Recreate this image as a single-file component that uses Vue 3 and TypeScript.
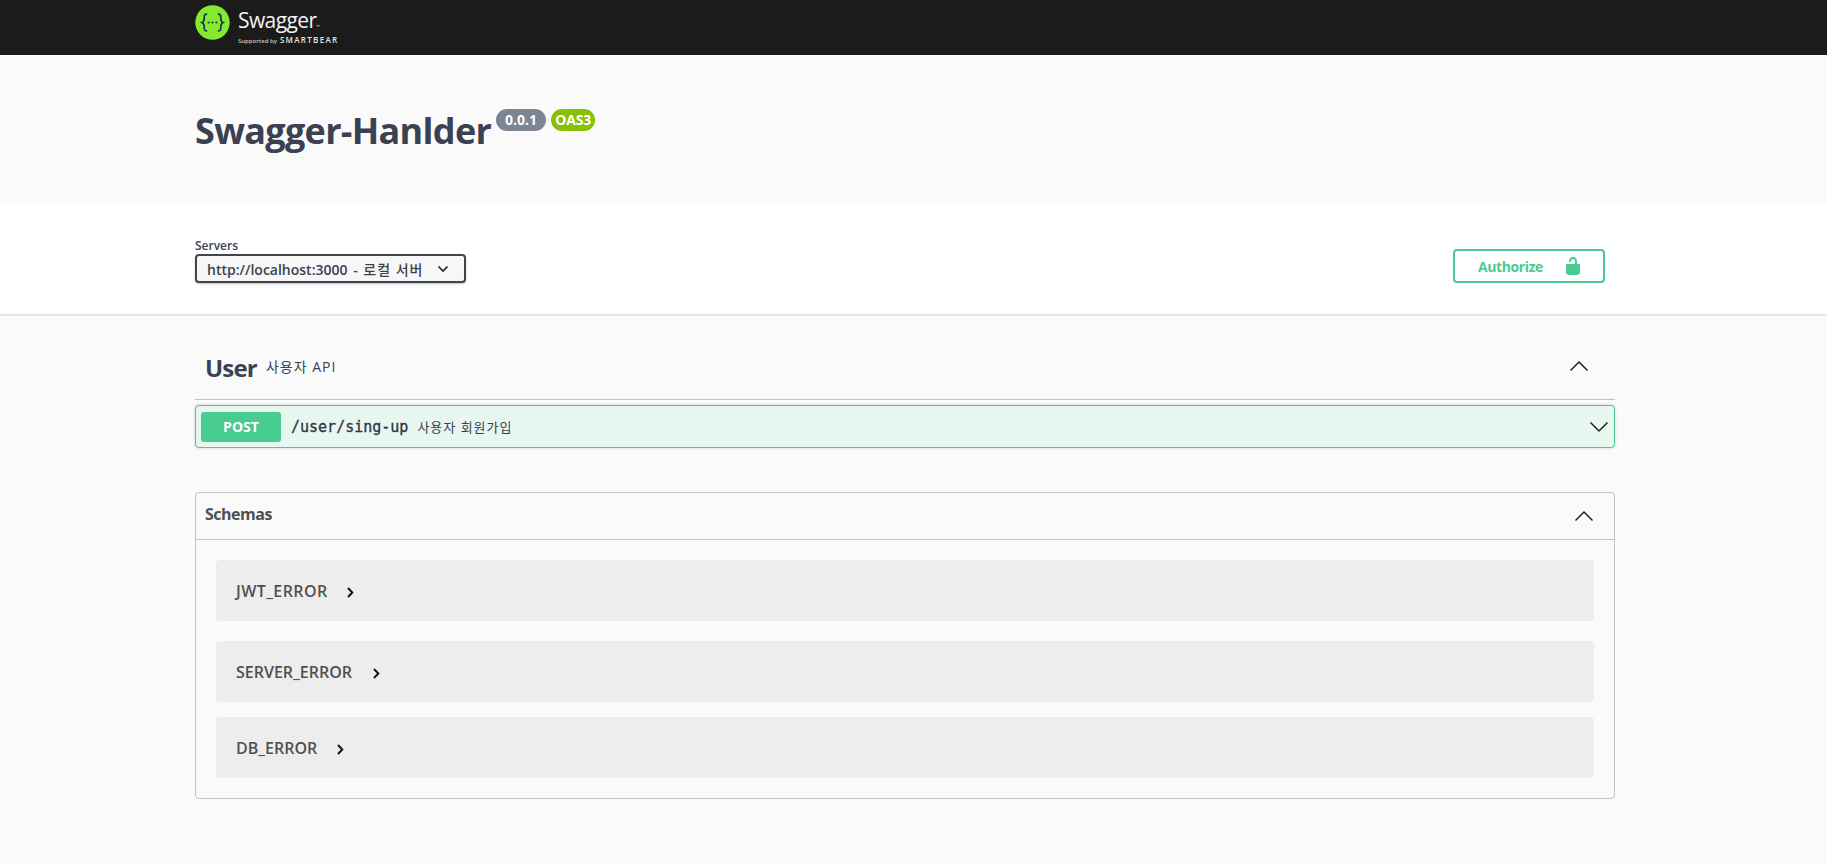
<script setup lang="ts">
const models: { name: string; cls: string }[] = [
  { name: 'JWT_ERROR', cls: 'first' },
  { name: 'SERVER_ERROR', cls: 'second' },
  { name: 'DB_ERROR', cls: 'third' },
]
</script>

<template>
  <div class="page">
    <header class="topbar">
      <div class="wrap logo">
        <svg class="logo-mark" width="35" height="35" viewBox="0 0 35 35">
          <circle cx="17.5" cy="17.5" r="17.2" fill="#85ea2d" />
          <path d="M12.2 9.2c-3.4-.2-3 2-3 4.300c0 2.200-.6 3.300-2.300 4c1.700.7 2.300 1.800 2.300 4c0 2.300-.4 4.500 3 4.300" fill="none" stroke="#173647" stroke-width="1.700" />
          <path d="M22.800 9.200c3.400-.2 3 2 3 4.300c0 2.200.6 3.300 2.300 4c-1.700.7-2.300 1.800-2.300 4c0 2.300.4 4.500-3 4.300" fill="none" stroke="#173647" stroke-width="1.700" />
          <circle cx="13.600" cy="17.500" r="1.100" fill="#173647" />
          <circle cx="17.500" cy="17.500" r="1.100" fill="#173647" />
          <circle cx="21.400" cy="17.500" r="1.100" fill="#173647" />
        </svg>
        <div class="logo-text">
          <div class="logo-name">Swagger<span class="tm">™</span></div>
          <div class="logo-sub"><span class="sup">Supported by</span><span class="bear">SMARTBEAR</span></div>
        </div>
      </div>
    </header>

    <section class="info">
      <div class="wrap title-row">
        <h1 class="title">Swagger-Hanlder</h1>
        <span class="badge version">0.0.1</span>
        <span class="badge oas">OAS3</span>
      </div>
    </section>

    <section class="schemes">
      <div class="wrap schemes-row">
        <div class="servers">
          <div class="servers-label">Servers</div>
          <div class="select">
            <span class="select-text">http://localhost:3000 - <span class="select-ko">로컬 서버</span></span>
            <svg width="12" height="8" viewBox="0 0 12 8"><path d="M1.500 1.500 6 6l4.500-4.500" fill="none" stroke="#222" stroke-width="1.700" /></svg>
          </div>
        </div>
        <button class="authorize" type="button">
          <span>Authorize</span>
          <svg width="20" height="20" viewBox="0 0 20 20">
            <path fill="#49cc90" d="M15.800 8H14V5.600C14 2.703 12.665 1 10 1 7.334 1 6 2.703 6 5.600V6h2v-.801C8 3.754 8.797 3 10 3c1.203 0 2 .754 2 2.199V8H4c-.553 0-1 .646-1 1.199V17c0 .549.428 1.139.951 1.307l1.197.387C5.672 18.861 6.550 19 7.100 19h5.799c.549 0 1.428-.139 1.951-.307l1.196-.387c.524-.167.954-.757.954-1.306V9.199C17 8.646 16.352 8 15.800 8z" />
          </svg>
        </button>
      </div>
    </section>

    <main class="wrap content">
      <div class="tag">
        <span class="tag-name">User</span>
        <span class="tag-desc">사용자 API</span>
        <svg class="tag-arrow" width="20" height="12" viewBox="0 0 20 12"><path d="M1.500 10.500 10 2l8.500 8.500" fill="none" stroke="#222" stroke-width="1.500" /></svg>
      </div>

      <div class="op">
        <span class="method">POST</span>
        <span class="path">/user/sing-up</span>
        <span class="summary">사용자 회원가입</span>
        <svg class="op-arrow" width="20" height="12" viewBox="0 0 20 12"><path d="M1.500 1.500 10 10l8.500-8.500" fill="none" stroke="#222" stroke-width="1.500" /></svg>
      </div>

      <section class="models">
        <div class="models-head">
          <span class="models-title">Schemas</span>
          <svg width="20" height="12" viewBox="0 0 20 12"><path d="M1.500 10.500 10 2l8.500 8.500" fill="none" stroke="#222" stroke-width="1.500" /></svg>
        </div>
        <div class="models-body">
          <div v-for="m in models" :key="m.name" class="model" :class="m.cls">
            <span class="model-name">{{ m.name }}</span>
            <svg class="model-arrow" width="7" height="11" viewBox="0 0 7 11"><path d="M1 1l4.300 4.500L1 10" fill="none" stroke="#111" stroke-width="2" /></svg>
          </div>
        </div>
      </section>
    </main>
  </div>
</template>

<style>
html, body { margin: 0; background: #fafafa; }
</style>

<style scoped>
.page {
  min-height: 865px;
  background: #fafafa;
  font-family: "Open Sans", "Noto Sans CJK KR", sans-serif;
  color: #3b4151;
}
.wrap { width: 1420px; margin-left: 195px; box-sizing: border-box; }

.topbar { height: 55px; background: #1b1b1b; }
.logo { display: flex; align-items: flex-start; padding-top: 5px; color: #fff; }
.logo-mark { display: block; }
.logo-text { margin-left: 8px; }
.logo-name { font-size: 21px; line-height: 26px; letter-spacing: -0.6px; font-weight: 400; color: #f4f4f4; margin-top: 2px; }
.tm { font-size: 4px; line-height: 0; vertical-align: baseline; }
.logo-sub { display: flex; align-items: baseline; line-height: 9px; margin-top: 2px; }
.sup { font-size: 6px; font-weight: 600; color: #c9c9c9; }
.bear { font-size: 8px; font-weight: 600; letter-spacing: 1.300px; margin-left: 3px; color: #e4e4e4; }

.info { height: 148px; }
.title-row { display: flex; align-items: flex-start; padding-top: 54px; }
.title { margin: 0; font-size: 36px; line-height: 44px; font-weight: 700; color: #3b4151; letter-spacing: -0.7px; }
.badge { height: 22px; line-height: 22px; border-radius: 11px; color: #fff; font-size: 14px; font-weight: 700; text-align: center; box-sizing: border-box; }
.version { width: 50px; background: #7d8492; margin-left: 5px; }
.oas { width: 44px; background: #89bf04; margin-left: 5px; letter-spacing: -0.2px; }

.schemes { height: 111px; background: #fff; box-shadow: 0 1px 2px 0 rgba(0, 0, 0, 0.15); position: relative; }
.schemes-row { display: flex; justify-content: space-between; align-items: flex-start; padding: 35px 10px 0 0; }
.servers-label { font-size: 12px; line-height: 16px; font-weight: 600; color: #3b4151; }
.select {
  display: flex; align-items: center; justify-content: space-between;
  width: 271px; height: 29px; box-sizing: border-box; padding: 0 15px 0 10px;
  margin-top: 0; background: #f7f7f7; border: 2px solid #41444e; border-radius: 4px;
  box-shadow: 0 1px 2px rgba(0, 0, 0, 0.25);
  font-size: 14px; font-weight: 600; color: #3b4151;
}
.select-text { word-spacing: 2px; }
.select-ko { font-weight: 500; letter-spacing: 1px; word-spacing: 0; }
.authorize {
  display: flex; align-items: center; justify-content: space-between;
  width: 152px; height: 34px; box-sizing: border-box; padding: 0 20px 0 23px; margin-top: 11px;
  background: transparent; border: 2px solid #49cc90; border-radius: 4px;
  font-family: inherit; font-size: 14px; font-weight: 700; letter-spacing: -0.4px; color: #49cc90;
}

.tag {
  display: flex; align-items: center; height: 86px; box-sizing: border-box; padding: 18px 0 0 10px;
  border-bottom: 1px solid rgba(59, 65, 81, 0.3);
}
.tag-name { font-size: 24px; line-height: 32px; font-weight: 700; letter-spacing: -0.8px; color: #3b4151; margin-top: 4px; }
.tag-desc { font-size: 14px; letter-spacing: 1px; margin-left: 9px; color: #3b4151; }
.tag-arrow { margin-left: auto; margin-right: 26px; }

.op {
  display: flex; align-items: center; height: 43px; box-sizing: border-box; margin-top: 5px; padding: 0 5px;
  background: #e8f6f0; border: 1px solid #49cc90; border-radius: 4px;
  box-shadow: 0 0 3px rgba(0, 0, 0, 0.19);
}
.method {
  width: 80px; height: 30px; line-height: 30px; text-align: center; border-radius: 3px;
  background: #49cc90; color: #fff; font-size: 14px; font-weight: 700;
}
.path { margin-left: 10px; font-family: "DejaVu Sans Mono", "Liberation Mono", monospace; font-size: 15px; font-weight: 400; color: #2f3443; -webkit-text-stroke: 0.3px #2f3443; }
.summary { margin-left: 9px; font-size: 13px; letter-spacing: 1px; color: #3b4151; }
.op-arrow { margin-left: auto; margin-right: 0; }

.models { margin-top: 44px; border: 1px solid rgba(59, 65, 81, 0.3); border-radius: 4px; }
.models-head {
  display: flex; align-items: center; justify-content: space-between;
  height: 47px; box-sizing: border-box; padding: 0 20px 0 9px;
  border-bottom: 1px solid rgba(59, 65, 81, 0.3);
  font-size: 16px; font-weight: 700; color: #505050;
}
.models-title { letter-spacing: -0.5px; margin-top: -4px; }
.models-body { padding: 20px 20px 20px; }
.model {
  display: flex; align-items: center; box-sizing: border-box; height: 61px; padding: 0 0 0 20px;
  background: rgba(0, 0, 0, 0.05); border-radius: 4px;
  font-size: 16px; font-weight: 600; color: #505050;
}
.model.second { margin-top: 20px; }
.model.third { margin-top: 15px; }
.model-name { margin-right: 21px; }
.first .model-name { letter-spacing: 0.4px; margin-right: 19px; }
.third .model-name { margin-right: 20px; }
.model-arrow { margin-top: 4px; }
</style>
